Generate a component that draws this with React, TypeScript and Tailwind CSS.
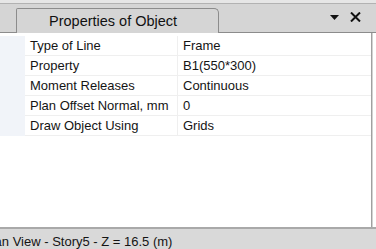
import React from "react";

const rows: [string, string][] = [
  ["Type of Line", "Frame"],
  ["Property", "B1(550*300)"],
  ["Moment Releases", "Continuous"],
  ["Plan Offset Normal, mm", "0"],
  ["Draw Object Using", "Grids"],
];

export default function App() {
  return (
    <div className="w-[376px] h-[249px] overflow-hidden flex flex-col bg-white font-['Liberation_Sans',Arial,sans-serif] text-[13px] text-[#141414]">
      {/* top strip */}
      <div className="h-[3px] bg-[#e6e6e6] shrink-0" />
      {/* header */}
      <div className="h-[30px] shrink-0 bg-[#d5d5d5] border-t border-[#b2b2b2] flex items-end">
        <div className="w-[16px] h-full border-b border-[#8c8c8c]" />
        <div className="w-[203px] h-[25px] border-l border-t border-r border-[#8c8c8c] rounded-tr-[5px] rounded-tl-[2px] bg-[#d5d5d5] pl-[32px] text-[14.5px] leading-[24px] text-[#111] whitespace-nowrap">
          Properties of Object
        </div>
        <div className="flex-1 h-full border-b border-[#8c8c8c] flex items-center justify-end pr-[15px] gap-[11px] pb-[2px]">
          <svg width="9" height="5" viewBox="0 0 9 5">
            <polygon points="0,0 9,0 4.5,5" fill="#111" />
          </svg>
          <svg width="11" height="10" viewBox="0 0 11 10">
            <path d="M1 0.5 L10 9.5 M10 0.5 L1 9.5" stroke="#111" strokeWidth="2" />
          </svg>
        </div>
      </div>
      {/* content */}
      <div className="h-[194px] shrink-0 flex">
        <div className="w-[371px] pt-[3px] bg-white">
          {rows.map(([k, v]) => (
            <div key={k} className="flex h-[20px]">
              <div className="w-[25px] bg-[#f1f4f9]" />
              <div className="w-[153px] border-b border-r border-[#efefef] pl-[5px] leading-[19px] whitespace-nowrap">
                {k}
              </div>
              <div className="flex-1 border-b border-[#efefef] pl-[5px] leading-[19px] whitespace-nowrap">
                {v}
              </div>
            </div>
          ))}
        </div>
        <div className="w-[1px] bg-[#a0a0a0]" />
        <div className="w-[1px] bg-[#d2d2d2]" />
        <div className="flex-1 bg-white" />
      </div>
      {/* status bar */}
      <div className="h-[2px] shrink-0 bg-[#a9a9a9]" />
      <div className="flex-1 bg-[#d9d9d9] overflow-hidden pt-[5px] leading-[15px] whitespace-nowrap">
        <span className="ml-[-17px] inline-block">Plan View - Story5 - Z = 16.5 (m)</span>
      </div>
    </div>
  );
}
